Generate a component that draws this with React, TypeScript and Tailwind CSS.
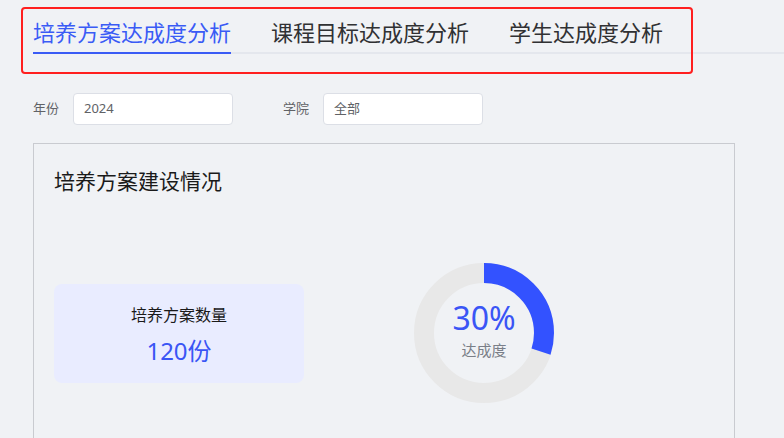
const tabs = ['培养方案达成度分析', '课程目标达成度分析', '学生达成度分析'];

const Donut = ({ percent }: { percent: number }) => {
  const r = 60;
  const c = 2 * Math.PI * r;
  return (
    <div className="relative w-[140px] h-[140px]">
      <svg width="140" height="140" viewBox="0 0 140 140">
        <circle cx="70" cy="70" r={r} fill="none" stroke="#e8e8e8" strokeWidth="20" />
        <circle
          cx="70"
          cy="70"
          r={r}
          fill="none"
          stroke="#3352ff"
          strokeWidth="20"
          strokeDasharray={`${(c * percent) / 100} ${c}`}
          transform="rotate(-90 70 70)"
        />
      </svg>
      <div className="absolute inset-0 flex flex-col items-center justify-center">
        <div className="text-[32px] leading-[36px] text-[#3a55f5] mt-[-6px]">{percent}%</div>
        <div className="text-[15px] leading-[20px] text-[#7a7f88] mt-[4px]">达成度</div>
      </div>
    </div>
  );
};

export default function App() {
  return (
    <div
      className="relative w-[784px] h-[438px] overflow-hidden bg-[#f0f2f5]"
      style={{ fontFamily: '"Noto Sans", "Noto Sans CJK SC", sans-serif' }}
    >
      {/* tabs */}
      <div className="pl-[33px] pt-[13px]">
        <div className="relative flex border-b-2 border-[#e4e7ed]">
          {tabs.map((t, i) => (
            <div
              key={t}
              className={`relative h-[39px] leading-[39px] text-[22px] ${i === 0 ? 'pr-[20px]' : 'px-[20px]'} ${
                i === 0 ? 'text-[#3a5bf5]' : 'text-[#303133]'
              }`}
            >
              {t}
              {i === 0 && <div className="absolute left-0 right-[20px] bottom-[-2px] h-[2px] bg-[#3a5bf5]" />}
            </div>
          ))}
        </div>
      </div>

      {/* filters */}
      <div className="flex items-center pl-[33px] mt-[39px] text-[13px] text-[#606266]">
        <span className="w-[26px]">年份</span>
        <div className="ml-[14px] w-[160px] h-[32px] bg-white border border-[#dcdfe6] rounded-[4px] flex items-center pl-[10px]">
          2024
        </div>
        <span className="ml-[50px] w-[26px]">学院</span>
        <div className="ml-[14px] w-[160px] h-[32px] bg-white border border-[#dcdfe6] rounded-[4px] flex items-center pl-[10px]">
          全部
        </div>
      </div>

      {/* card */}
      <div className="ml-[33px] mt-[18px] w-[702px] h-[320px] border border-[#c9cbd0] px-[20px] pt-[22px]">
        <div className="text-[21px] leading-[30px] text-[#1a1a1a]">培养方案建设情况</div>
        <div className="flex items-center mt-[67px]">
          <div className="w-[250px] h-[99px] rounded-[8px] bg-[#e9ecff] flex flex-col items-center pt-[20px]">
            <div className="text-[16px] leading-[22px] text-[#1a1a1a]">培养方案数量</div>
            <div className="text-[24px] leading-[32px] text-[#3a55f5] mt-[9px]">120份</div>
          </div>
          <div className="ml-[110px]">
            <Donut percent={30} />
          </div>
        </div>
      </div>

      {/* annotation */}
      <div className="absolute left-[21px] top-[7px] w-[672px] h-[67px] border-2 border-[#ff1f1f] rounded-[4px]" />
    </div>
  );
}
